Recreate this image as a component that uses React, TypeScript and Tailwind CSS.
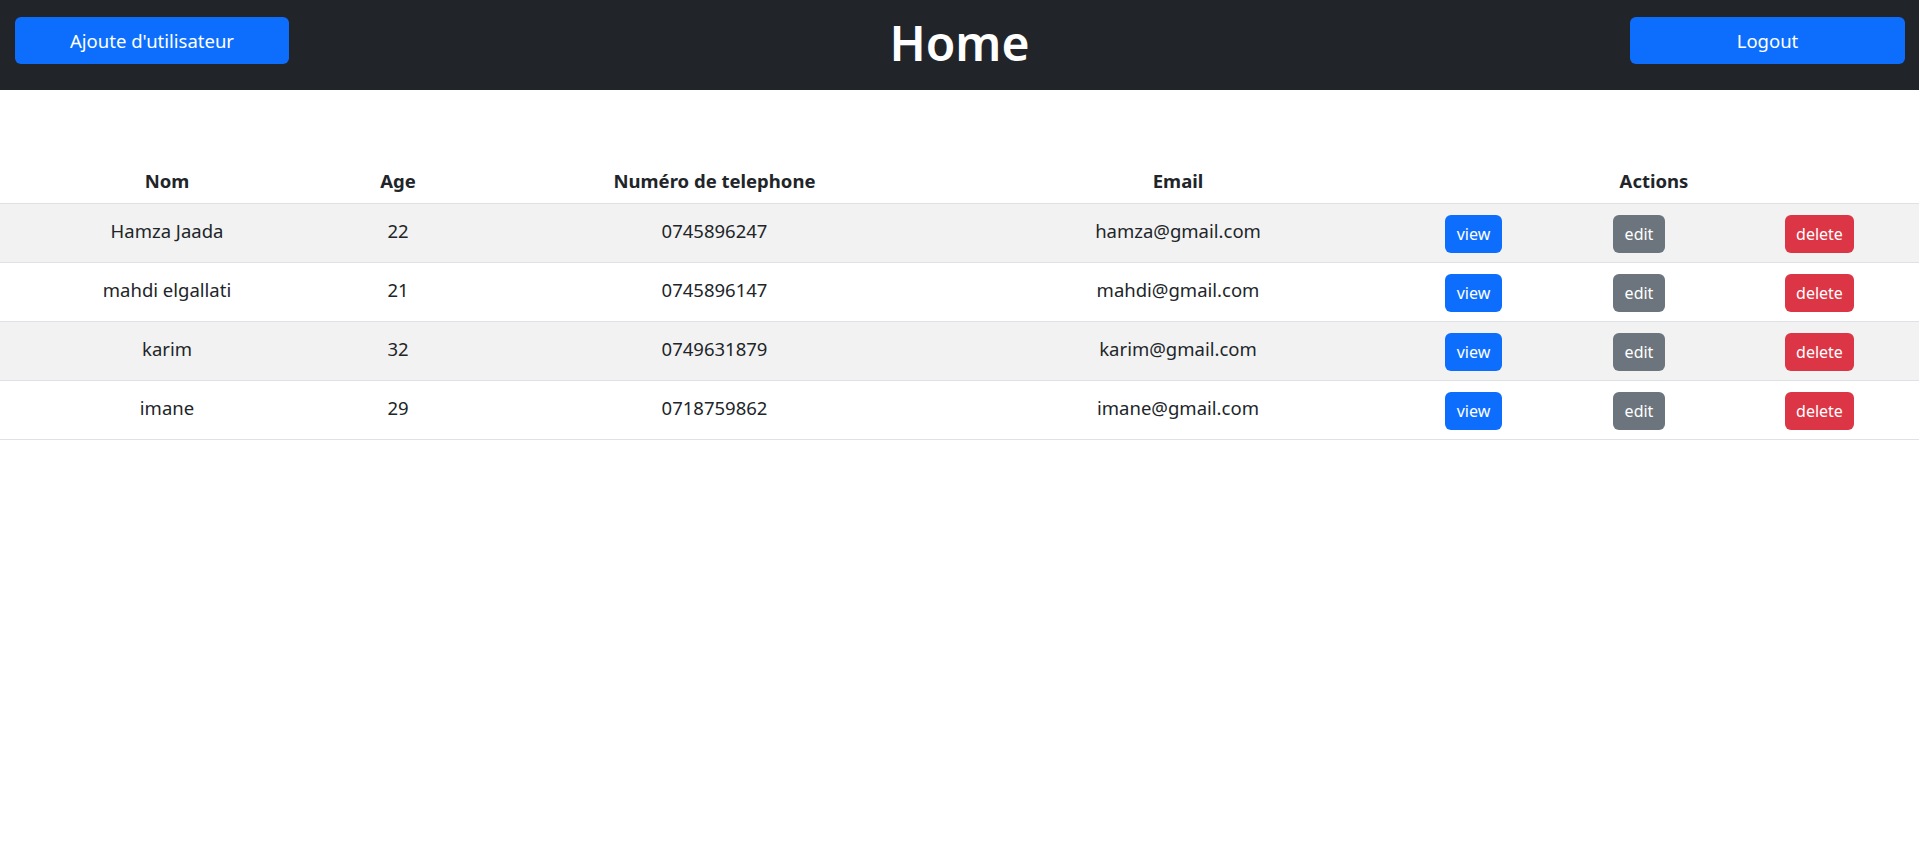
import React from 'react';

type User = { nom: string; age: number; tel: string; email: string };

const users: User[] = [
  { nom: 'Hamza Jaada', age: 22, tel: '0745896247', email: 'hamza@gmail.com' },
  { nom: 'mahdi elgallati', age: 21, tel: '0745896147', email: 'mahdi@gmail.com' },
  { nom: 'karim', age: 32, tel: '0749631879', email: 'karim@gmail.com' },
  { nom: 'imane', age: 29, tel: '0718759862', email: 'imane@gmail.com' },
];

const cols = 'grid grid-cols-[334px_128px_505px_422px_169px_162px_1fr]';

export default function App() {
  return (
    <div className="min-h-screen bg-white text-[#212529]" style={{ fontFamily: '"Noto Sans", "Open Sans", sans-serif' }}>
      {/* Header */}
      <header className="h-[90px] bg-[#212529] flex items-start justify-between pt-[17px] pl-[15px] pr-[14px]">
        <button className="w-[274px] h-[47px] rounded-[6px] bg-[#0d6efd] text-white text-[18.5px]">
          Ajoute d'utilisateur
        </button>
        <h1 className="h-[47px] flex items-center mt-[2px] text-[48px] font-semibold text-white leading-none">Home</h1>
        <button className="w-[275px] h-[47px] rounded-[6px] bg-[#0d6efd] text-white text-[18.5px]">
          Logout
        </button>
      </header>

      {/* Table */}
      <div className="mt-[68px] text-[18.5px]">
        <div className={`${cols} h-[46px] items-center font-bold border-b border-[#dee2e6] text-center`}>
          <div>Nom</div>
          <div>Age</div>
          <div>Numéro de telephone</div>
          <div>Email</div>
          <div className="col-span-3">Actions</div>
        </div>
        {users.map((u, i) => (
          <div
            key={u.email}
            className={`${cols} h-[59px] border-b border-[#dee2e6] text-center ${i % 2 === 0 ? 'bg-[#f2f2f2]' : 'bg-white'}`}
          >
            <div className="pt-[13px]">{u.nom}</div>
            <div className="pt-[13px]">{u.age}</div>
            <div className="pt-[13px]">{u.tel}</div>
            <div className="pt-[13px]">{u.email}</div>
            <div className="pt-[11px] flex justify-center">
              <button className="h-[38px] w-[57px] rounded-[6px] bg-[#0d6efd] text-white text-[16px]">view</button>
            </div>
            <div className="pt-[11px] flex justify-center">
              <button className="h-[38px] w-[52px] rounded-[6px] bg-[#6c757d] text-white text-[16px]">edit</button>
            </div>
            <div className="pt-[11px] flex justify-center">
              <button className="h-[38px] w-[69px] rounded-[6px] bg-[#dc3545] text-white text-[16px]">delete</button>
            </div>
          </div>
        ))}
      </div>
    </div>
  );
}
